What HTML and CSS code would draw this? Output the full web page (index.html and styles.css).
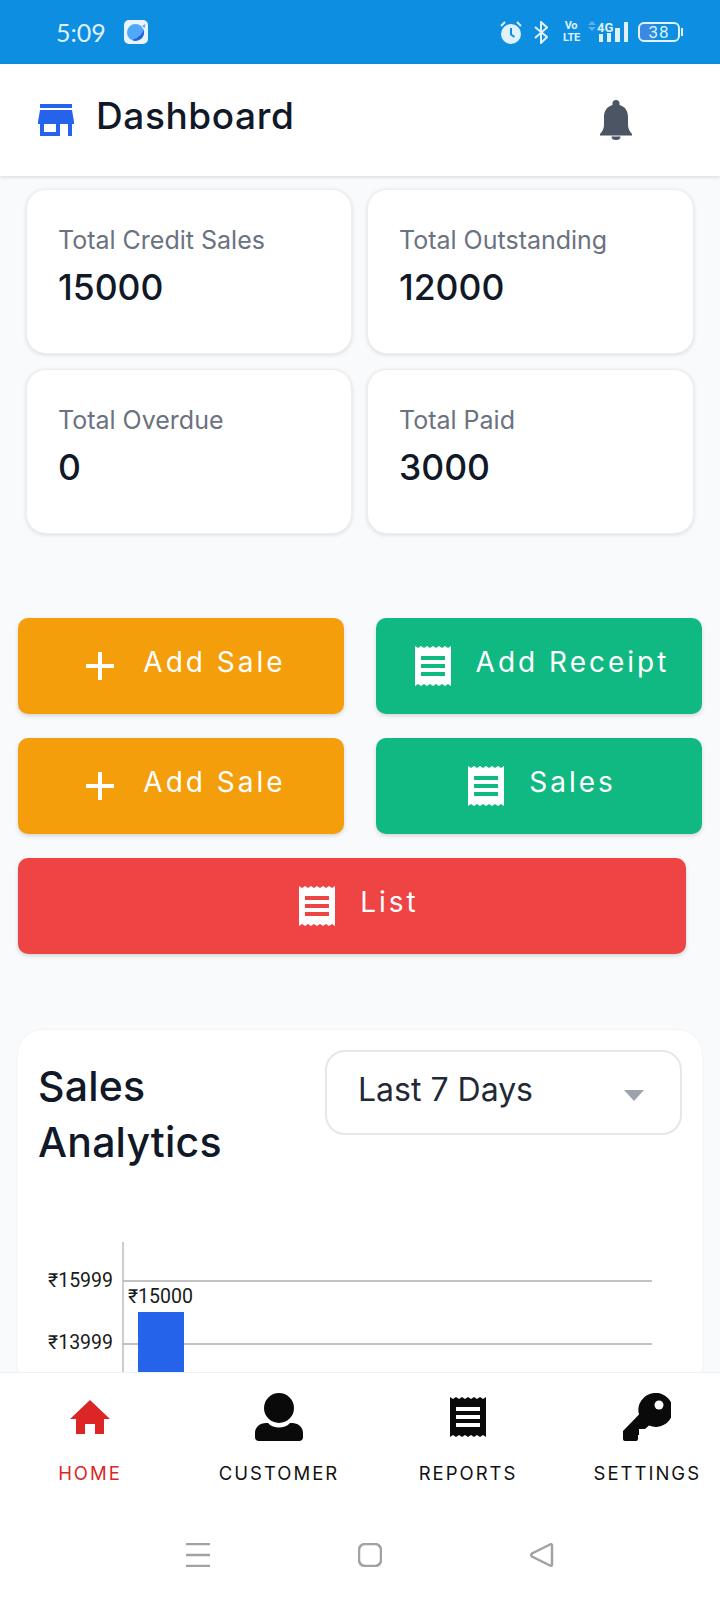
FILE: index.html

```html
<!DOCTYPE html>
<html lang="en">
<head>
    <meta charset="UTF-8">
    <meta name="viewport" content="width=device-width, initial-scale=1.0">
    <title>Dashboard</title>
    <link rel="stylesheet" href="styles.css">
</head>
<body>

<svg class="defs" width="0" height="0">
    <symbol id="receipt" viewBox="0 0 36 40">
        <path fill-rule="evenodd" d="M0 0l3 2 3-2 3 2 3-2 3 2 3-2 3 2 3-2 3 2 3-2 3 2 3-2v40l-3-2-3 2-3-2-3 2-3-2-3 2-3-2-3 2-3-2-3 2-3-2-3 2zM6 10v4h24v-4zM6 18v4h24v-4zM6 26v4h24v-4z"/>
    </symbol>
</svg>

<div class="status-bar">
    <div class="status-left">
        <span class="clock">5:09</span>
        <span class="app-icon">
            <svg width="24" height="24" viewBox="0 0 24 24">
                <rect width="24" height="24" rx="5" fill="#eaf4fd"/>
                <circle cx="11.500" cy="12.500" r="8.500" fill="#4fa8fa"/>
                <path d="M19.500 8.500C20.500 14.500 15.500 20 9 20.500 15 22.500 22.500 16 19.500 8.500z" fill="#1f5fd6"/>
                <path d="M9 19.500C14 18.500 18.500 14 19.800 9.500 20.500 15 15.500 20.500 9 20.500z" fill="#1f5fd6"/>
                <path d="M18 6l3.500-2-1 4z" fill="#4fa8fa"/>
            </svg>
        </span>
    </div>
    <div class="status-right">
        <svg class="s-alarm" width="22" height="23" viewBox="0 0 22 23">
            <circle cx="11" cy="13" r="10" fill="#dff1fd"/>
            <path d="M11 7v6.500l3.500 2.500" fill="none" stroke="#0e8ee0" stroke-width="2"/>
            <path d="M1 5l4-4M21 5l-4-4" fill="none" stroke="#dff1fd" stroke-width="2"/>
        </svg>
        <svg class="s-bt" width="14" height="23" viewBox="0 0 14 23">
            <path d="M1 6l12 10-6 6V1l6 5.500L1 17" fill="none" stroke="#dff1fd" stroke-width="2"/>
        </svg>
        <span class="s-volte">Vo<br>LTE</span>
        <svg class="s-signal" width="40" height="22" viewBox="0 0 40 22">
            <path d="M0 4l4-4 4 4zM0 6l4 4 4-4z" fill="#5cb1ea"/>
            <text x="9" y="11" class="s-4g">4G</text>
            <rect x="11" y="13" width="4" height="8" fill="#dff1fd"/>
            <rect x="19" y="12" width="4" height="9" fill="#dff1fd"/>
            <rect x="27" y="7" width="5" height="14" fill="#dff1fd"/>
            <rect x="36" y="1" width="4" height="20" fill="#dff1fd"/>
        </svg>
        <span class="battery">38</span>
        <span class="battery-nib"></span>
    </div>
</div>

<header class="top-bar">
    <div class="top-title">
        <svg width="36" height="32" viewBox="0 0 36 32" fill="#2563eb">
            <rect x="2" width="32" height="4"/>
            <path d="M2 6h32l2 12v2H0v-2z"/>
            <path fill-rule="evenodd" d="M2 20h20v12H2zM6 20v8h12v-8z"/>
            <rect x="30" y="20" width="4" height="12"/>
        </svg>
        <h1>Dashboard</h1>
    </div>
    <svg width="32" height="40" viewBox="0 0 32 40" fill="#4b5563">
        <path d="M16 0a3.500 3.500 0 0 1 3.500 3.500V5C25 6.500 28 11 28 17v8c0 4 2 7 4 9v1.500H0V34c2-2 4-5 4-9v-8C4 11 7 6.500 12.500 5V3.500A3.500 3.500 0 0 1 16 0z"/>
        <path d="M11.500 36.500h9a4.500 3.500 0 0 1-9 0z"/>
    </svg>
</header>

<main class="content">
    <section class="stats">
        <div class="stat-card">
            <p class="stat-label">Total Credit Sales</p>
            <p class="stat-value">15000</p>
        </div>
        <div class="stat-card">
            <p class="stat-label">Total Outstanding</p>
            <p class="stat-value">12000</p>
        </div>
        <div class="stat-card">
            <p class="stat-label">Total Overdue</p>
            <p class="stat-value">0</p>
        </div>
        <div class="stat-card">
            <p class="stat-label">Total Paid</p>
            <p class="stat-value">3000</p>
        </div>
    </section>

    <section class="actions">
        <div class="btn btn-orange">
            <svg class="btn-icon" viewBox="0 0 36 40"><path d="M4 20h28M18 6v28" stroke="currentColor" stroke-width="4" fill="none"/></svg>
            <span class="btn-text">Add Sale</span>
        </div>
        <div class="btn btn-green">
            <svg class="btn-icon"><use href="#receipt"/></svg>
            <span class="btn-text">Add Receipt</span>
        </div>
        <div class="btn btn-orange">
            <svg class="btn-icon" viewBox="0 0 36 40"><path d="M4 20h28M18 6v28" stroke="currentColor" stroke-width="4" fill="none"/></svg>
            <span class="btn-text">Add Sale</span>
        </div>
        <div class="btn btn-green">
            <svg class="btn-icon"><use href="#receipt"/></svg>
            <span class="btn-text">Sales</span>
        </div>
        <div class="btn btn-red">
            <svg class="btn-icon"><use href="#receipt"/></svg>
            <span class="btn-text">List</span>
        </div>
    </section>

    <section class="analytics">
        <div class="analytics-head">
            <h2>Sales<br>Analytics</h2>
            <div class="range-select">
                <span class="range-text">Last 7 Days</span>
                <span class="caret"></span>
            </div>
        </div>
        <svg class="chart" width="684" height="240" viewBox="0 0 684 240">
            <line x1="105" y1="0" x2="105" y2="240" class="axis"/>
            <line x1="105" y1="39" x2="634" y2="39" class="grid"/>
            <line x1="105" y1="102" x2="634" y2="102" class="grid"/>
            <rect x="120" y="70" width="46" height="170" fill="#2563eb"/>
            <text x="95" y="45" text-anchor="end" class="chart-text">₹15999</text>
            <text x="95" y="107" text-anchor="end" class="chart-text">₹13999</text>
            <text x="110" y="61" class="chart-text">₹15000</text>
        </svg>
    </section>
</main>

<nav class="bottom-nav">
    <div class="nav-item active">
        <span class="nav-icon">
            <svg width="40" height="34" viewBox="0 0 40 34" fill="currentColor"><path d="M20 0l20 19h-6v15h-9V24H15v10H6V19H0z"/></svg>
        </span>
        <span>HOME</span>
    </div>
    <div class="nav-item">
        <span class="nav-icon">
            <svg width="48" height="48" viewBox="0 0 48 48" fill="#0a0a0a">
                <circle cx="24" cy="15" r="15"/>
                <path d="M4 48q-4 0-4-4v-4c0-6 5-10 11-10h2c3 3.500 7 4.500 11 4.500s8-1 11-4.500h2c6 0 11 4 11 10v4q0 4-4 4z"/>
            </svg>
        </span>
        <span>CUSTOMER</span>
    </div>
    <div class="nav-item">
        <span class="nav-icon">
            <svg width="36" height="40" fill="#0a0a0a"><use href="#receipt"/></svg>
        </span>
        <span>REPORTS</span>
    </div>
    <div class="nav-item nav-last">
        <span class="nav-icon">
            <svg width="48" height="48" viewBox="0 0 48 48" fill="#0a0a0a">
                <path d="M31 0a17 17 0 1 1-5 32.500L22 36h-6v6h-1v4q0 2-2 2H2q-2 0-2-2v-8l16-16.500A17 17 0 0 1 31 0z"/>
                <circle cx="36" cy="12" r="4.500" fill="#fff"/>
            </svg>
        </span>
        <span>SETTINGS</span>
    </div>
</nav>

<div class="system-bar">
    <svg width="24" height="24" viewBox="0 0 24 24"><path d="M0 1h24M0 12h24M0 23h24" class="sys-line"/></svg>
    <svg width="24" height="24" viewBox="0 0 24 24"><rect x="1" y="1" width="22" height="22" rx="6" class="sys-line"/></svg>
    <svg width="24" height="24" viewBox="0 0 24 24"><path d="M22 2.500v19q0 2-2 1L2 13.500q-1.500-1.500 0-3L20 1.500q2-1 2 1z" class="sys-line"/></svg>
</div>

</body>
</html>
```

FILE: styles.css

```css
* {
    box-sizing: border-box;
}

body {
    margin: 0;
    width: 720px;
    height: 1600px;
    display: flex;
    flex-direction: column;
    overflow: hidden;
    font-family: Inter, "Noto Sans", sans-serif;
    background: #f9fafb;
    color: #111827;
}

.defs {
    position: absolute;
}

/* status bar */
.status-bar {
    height: 64px;
    flex: none;
    display: flex;
    justify-content: space-between;
    align-items: center;
    padding: 0 37px 0 56px;
    background: #0e8ee0;
    color: #dff1fd;
}

.status-left,
.status-right {
    display: flex;
    align-items: center;
}

.clock {
    font-family: Lato, sans-serif;
    font-size: 25px;
}

.app-icon {
    display: flex;
    margin-left: 18px;
}

.s-bt { margin-left: 12px; }

.s-volte {
    margin-left: 15px;
    font-family: Roboto, sans-serif;
    font-size: 11px;
    font-weight: 700;
    line-height: 12px;
    letter-spacing: -0.3px;
    width: 16px;
    text-align: center;
}

.s-signal { margin-left: 9px; }

.s-4g {
    font-family: Roboto, sans-serif;
    font-size: 13px;
    font-weight: 700;
    fill: #dff1fd;
}

.battery {
    width: 42px;
    height: 20px;
    margin-left: 10px;
    border: 2px solid #dff1fd;
    border-radius: 6px;
    background: linear-gradient(90deg, #3a8ae4 38%, transparent 38%);
    font-family: Roboto, sans-serif;
    font-size: 17px;
    line-height: 16px;
    letter-spacing: 1px;
    text-align: center;
}

.battery-nib {
    width: 2px;
    height: 8px;
    margin-left: 1px;
    background: #dff1fd;
}

/* header */
.top-bar {
    height: 112px;
    flex: none;
    display: flex;
    justify-content: space-between;
    align-items: center;
    padding: 0 88px 0 38px;
    background: #fff;
    box-shadow: 0 1px 4px rgba(0, 0, 0, 0.15);
    position: relative;
}

.top-title {
    display: flex;
    align-items: center;
    gap: 22px;
}

.top-title h1 {
    margin: 0 0 10px;
    font-size: 37px;
    font-weight: 500;
    letter-spacing: 0.6px;
}

/* scroll area */
.content {
    flex: 1;
    min-height: 0;
    overflow: hidden;
}

.stats {
    display: grid;
    grid-template-columns: 326px 327px;
    grid-auto-rows: 165px;
    gap: 15px;
    padding: 13px 0 0 26px;
}

.stat-card {
    padding: 35px 31px;
    background: #fff;
    border: 1px solid #eceef1;
    border-radius: 20px;
    box-shadow: 0 1px 4px rgba(0, 0, 0, 0.12);
}

.stat-label {
    margin: 0;
    font-size: 25px;
    line-height: 30px;
    color: #6b7280;
}

.stat-value {
    margin: 8px 0 0;
    font-size: 35.5px;
    line-height: 50px;
    font-weight: 500;
}

.actions {
    display: grid;
    grid-template-columns: 326px 326px;
    grid-auto-rows: 96px;
    gap: 24px 32px;
    margin-top: 84px;
    padding-left: 18px;
}

.btn {
    display: flex;
    justify-content: center;
    align-items: center;
    gap: 25px;
    padding-left: 6px;
    border-radius: 10px;
    color: #fff;
    font-size: 28px;
    letter-spacing: 3px;
    box-shadow: 0 2px 4px rgba(0, 0, 0, 0.15);
}

.btn-text {
    margin-bottom: 8px;
}

.btn-icon {
    width: 36px;
    height: 40px;
    fill: currentColor;
}

.btn-orange { background: #f59e0b; }
.btn-green { background: #10b981; }

.btn-red {
    grid-column: span 2;
    width: 668px;
    padding-left: 14px;
    background: #ef4444;
}

.analytics {
    width: 684px;
    height: 600px;
    margin: 76px 0 0 18px;
    background: #fff;
    border-radius: 24px;
    box-shadow: 0 0 2px rgba(0, 0, 0, 0.08);
}

.analytics-head {
    display: flex;
    justify-content: space-between;
    align-items: flex-start;
    height: 212px;
    padding: 20px 20px 0;
}

.analytics-head h2 {
    margin: 8px 0 0;
    font-size: 41px;
    line-height: 56px;
    font-weight: 500;
    letter-spacing: 0.2px;
}

.range-select {
    width: 357px;
    height: 85px;
    display: flex;
    justify-content: space-between;
    align-items: center;
    padding: 0 36px 0 31px;
    border: 2px solid #e5e7eb;
    border-radius: 20px;
    font-size: 32px;
    color: #1f2937;
}

.range-text {
    margin-bottom: 6px;
}

.caret {
    width: 0;
    height: 0;
    border-left: 10px solid transparent;
    border-right: 10px solid transparent;
    border-top: 11px solid #9ca3af;
    margin-top: 6px;
}

.chart {
    display: block;
}

.axis {
    stroke: #bdbdbd;
    stroke-width: 1.5;
}

.grid {
    stroke: #aeaeae;
    stroke-width: 1.5;
}

.chart-text {
    font-family: Roboto, sans-serif;
    font-size: 19.5px;
    fill: #1a1a1a;
}

/* bottom nav */
.bottom-nav {
    height: 140px;
    flex: none;
    display: grid;
    grid-template-columns: 180px 198px 180px 162px;
    padding-top: 20px;
    background: #fff;
    border-top: 1px solid #f0f1f3;
    position: relative;
    color: #111;
}

.nav-item {
    display: flex;
    flex-direction: column;
    align-items: center;
    gap: 19px;
    font-size: 18.5px;
    letter-spacing: 2px;
    line-height: 26px;
}

.nav-item.active {
    color: #dc2626;
}

.nav-last {
    justify-self: end;
    margin-right: 19px;
}

.nav-icon {
    height: 48px;
    display: flex;
    align-items: center;
}

.system-bar {
    height: 88px;
    flex: none;
    display: flex;
    justify-content: space-between;
    align-items: flex-start;
    padding: 31px 166px 0 186px;
    background: #fff;
}

.sys-line {
    fill: none;
    stroke: #a2a2a2;
    stroke-width: 2.5;
}
```
